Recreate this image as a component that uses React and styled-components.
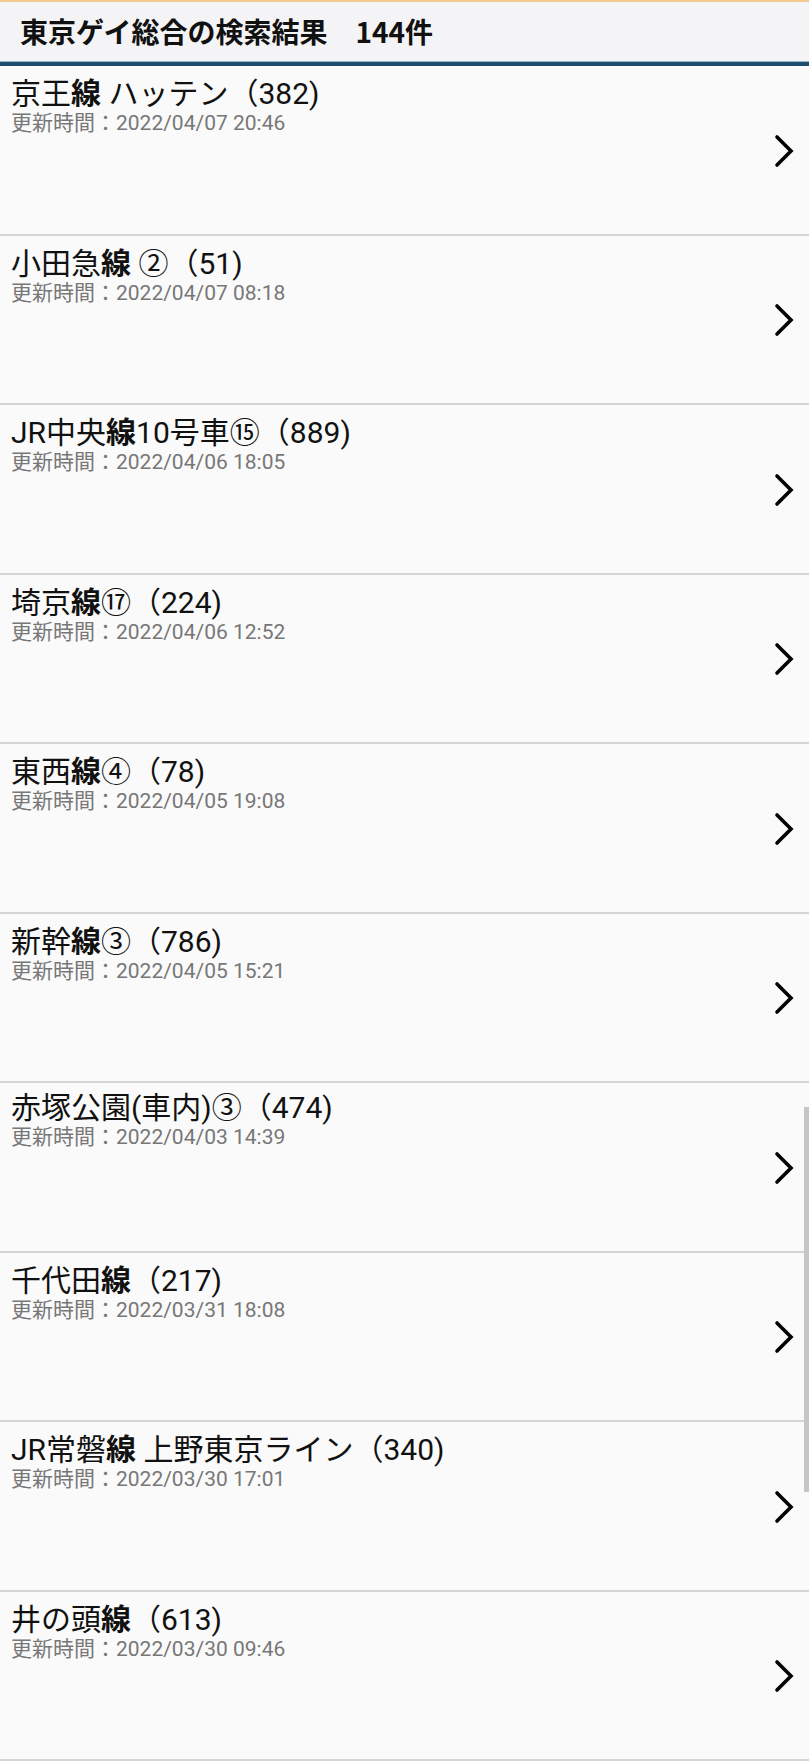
import React from "react";
import styled, { createGlobalStyle } from "styled-components";

const GlobalStyle = createGlobalStyle`
  html, body {
    margin: 0;
    padding: 0;
    background: #fafafa;
  }
  body {
    font-family: "Roboto", "Noto Sans CJK JP", sans-serif;
    color: #111;
  }
`;

const results = [
  { pre: "京王", post: " ハッテン", count: 382, time: "2022/04/07 20:46" },
  { pre: "小田急", post: " ②", count: 51, time: "2022/04/07 08:18" },
  { pre: "JR中央", post: "10号車⑮", count: 889, time: "2022/04/06 18:05" },
  { pre: "埼京", post: "⑰", count: 224, time: "2022/04/06 12:52" },
  { pre: "東西", post: "④", count: 78, time: "2022/04/05 19:08" },
  { pre: "新幹", post: "③", count: 786, time: "2022/04/05 15:21" },
  { plain: "赤塚公園(車内)③", count: 474, time: "2022/04/03 14:39" },
  { pre: "千代田", post: "", count: 217, time: "2022/03/31 18:08" },
  { pre: "JR常磐", post: " 上野東京ライン", count: 340, time: "2022/03/30 17:01" },
  { pre: "井の頭", post: "", count: 613, time: "2022/03/30 09:46" },
];

const App = () => {
  return (
    <Page>
      <GlobalStyle />
      <Header>
        <HeaderTitle>東京ゲイ総合の検索結果　144件</HeaderTitle>
      </Header>

      <List>
        {results.map((r, i) => (
          <Row key={i}>
            <Info>
              <Title>
                {r.plain ? (
                  r.plain
                ) : (
                  <>
                    {r.pre}
                    <b>線</b>
                    {r.post}
                  </>
                )}
                （{r.count})
              </Title>
              <Updated>更新時間：{r.time}</Updated>
            </Info>
            <Chevron viewBox="0 0 20 34">
              <polyline points="3,3 17,17 3,31" />
            </Chevron>
          </Row>
        ))}
      </List>

      {/* overlay scrollbar */}
      <ScrollThumb />
    </Page>
  );
};

export default App;

const Page = styled.div`
  position: relative;
  width: 809px;
  min-height: 1761px;
  overflow: hidden;
  background: #fafafa;
`;

const Header = styled.header`
  display: flex;
  align-items: center;
  height: 58px;
  padding: 0 0 2px 20px;
  background: #f4f4f6;
  border-top: 2px solid #f3c98f;
  border-bottom: 4px solid #1e4c6a;
  box-shadow: inset 0 -1px 0 #8fb8d0;
`;

const HeaderTitle = styled.h1`
  margin: 0;
  font-family: "Noto Sans CJK JP", sans-serif;
  font-size: 28px;
  font-weight: 700;
  line-height: 34px;
  color: #111;
`;

const List = styled.div`
  display: flex;
  flex-direction: column;
`;

const Row = styled.div`
  display: grid;
  grid-template-columns: 1fr auto;
  box-sizing: border-box;
  height: 169.5px;
  padding: 8px 15px 0 11px;
  border-bottom: 2px solid #d5d5d5;
  background: #fafafa;
`;

const Info = styled.div`
  display: flex;
  flex-direction: column;
`;

const Title = styled.div`
  font-size: 30px;
  line-height: 34px;
  color: #111;
  white-space: nowrap;

  b {
    font-family: "Noto Sans CJK JP", sans-serif;
    font-weight: 700;
  }
`;

const Updated = styled.div`
  font-size: 21px;
  line-height: 24px;
  color: #777;
  white-space: nowrap;
`;

const Chevron = styled.svg`
  align-self: center;
  width: 20px;
  height: 34px;
  margin-top: -6px;
  fill: none;
  stroke: #000;
  stroke-width: 3.6;
  stroke-linecap: round;
  stroke-linejoin: miter;
`;

const ScrollThumb = styled.div`
  position: absolute;
  right: 0;
  top: 1107px;
  width: 5px;
  height: 385px;
  background: #c6c6c6;
`;
